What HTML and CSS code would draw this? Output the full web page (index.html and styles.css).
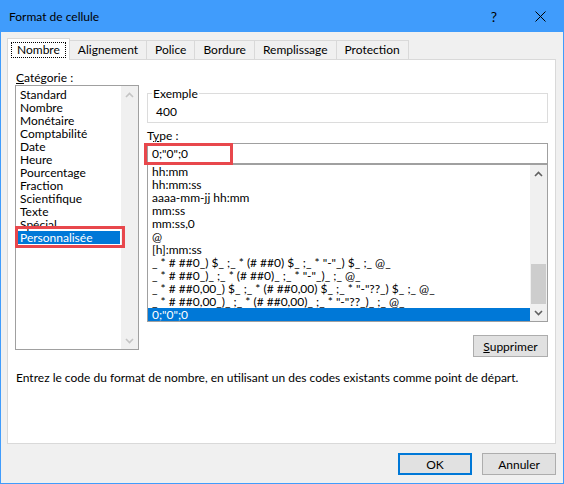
FILE: index.html
```html
<!DOCTYPE html>
<html lang="fr">
<head>
  <meta charset="UTF-8">
  <title>Format de cellule</title>
  <link rel="stylesheet" href="styles.css">
</head>
<body>
  <div class="dialog">
    <div class="titlebar">
      <span class="title">Format de cellule</span>
      <span class="help">?</span>
      <span class="close">
        <svg width="11" height="11" viewBox="0 0 11 11"><path d="M0.5 0.5 L10.5 10.5 M10.5 0.5 L0.5 10.5" stroke="#000" stroke-width="1" fill="none"/></svg>
      </span>
    </div>

    <div class="tabs">
      <div class="tab active"><span class="focus">Nombre</span></div>
      <div class="tab">Alignement</div>
      <div class="tab">Police</div>
      <div class="tab">Bordure</div>
      <div class="tab">Remplissage</div>
      <div class="tab">Protection</div>
    </div>

    <div class="panel">
      <div class="columns">
        <div class="cat-col">
          <div class="label"><u>C</u>atégorie :</div>
          <div class="listbox cat-list">
            <ul class="items">
              <li>Standard</li>
              <li>Nombre</li>
              <li>Monétaire</li>
              <li>Comptabilité</li>
              <li>Date</li>
              <li>Heure</li>
              <li>Pourcentage</li>
              <li>Fraction</li>
              <li>Scientifique</li>
              <li>Texte</li>
              <li>Spécial</li>
              <li class="selected">Personnalisée</li>
            </ul>
            <div class="scrollbar disabled">
              <span class="arrow"><svg width="9" height="6" viewBox="0 0 9 6"><path d="M1 5 L4.5 1.5 L8 5" /></svg></span>
              <span class="track"></span>
              <span class="arrow"><svg width="9" height="6" viewBox="0 0 9 6"><path d="M1 1 L4.5 4.5 L8 1" /></svg></span>
            </div>
          </div>
        </div>

        <div class="main-col">
          <fieldset class="sample">
            <legend>Exemple</legend>
            <div class="sample-value">400</div>
          </fieldset>

          <div class="label type-label">T<u>y</u>pe :</div>
          <div class="type-input">0;"0";0</div>

          <div class="listbox fmt-list">
            <ul class="items">
              <li>hh:mm</li>
              <li>hh:mm:ss</li>
              <li>aaaa-mm-jj hh:mm</li>
              <li>mm:ss</li>
              <li>mm:ss,0</li>
              <li>@</li>
              <li>[h]:mm:ss</li>
              <li>_ * # ##0_) $_ ;_ * (# ##0) $_ ;_ * "-"_) $_ ;_ @_</li>
              <li>_ * # ##0_)_ ;_ * (# ##0)_ ;_ * "-"_)_ ;_ @_</li>
              <li>_ * # ##0,00_) $_ ;_ * (# ##0,00) $_ ;_ * "-"??_) $_ ;_ @_</li>
              <li>_ * # ##0,00_)_ ;_ * (# ##0,00)_ ;_ * "-"??_)_ ;_ @_</li>
              <li class="selected">0;"0";0</li>
            </ul>
            <div class="scrollbar">
              <span class="arrow"><svg width="9" height="6" viewBox="0 0 9 6"><path d="M1 5 L4.5 1.5 L8 5" /></svg></span>
              <span class="track"><span class="thumb"></span></span>
              <span class="arrow"><svg width="9" height="6" viewBox="0 0 9 6"><path d="M1 1 L4.5 4.5 L8 1" /></svg></span>
            </div>
          </div>

          <div class="btn-row">
            <button class="btn"><u>S</u>upprimer</button>
          </div>
        </div>
      </div>

      <p class="hint">Entrez le code du format de nombre, en utilisant un des codes existants comme point de départ.</p>
    </div>

    <div class="footer">
      <button class="btn default">OK</button>
      <button class="btn">Annuler</button>
    </div>

    <div class="mark mark-cat"></div>
    <div class="mark mark-type"></div>
  </div>
</body>
</html>
```

FILE: styles.css
```css
body {
  margin: 0;
  font-family: Lato, "Liberation Sans", sans-serif;
  font-size: 12px;
  color: #000000;
  background-color: #ffffff;
}

.dialog {
  position: relative;
  width: 564px;
  height: 484px;
  box-sizing: border-box;
  border: 1px solid #409cfc;
  background-color: #f0f0f0;
}

/* barre de titre */
.titlebar {
  height: 31px;
  background-color: #409cfc;
  display: flex;
  align-items: center;
  padding-left: 8px;
}

.title {
  flex: 1;
  font-size: 12px;
}

.help {
  width: 46px;
  text-align: center;
  font-size: 14px;
}

.close {
  width: 46px;
  display: flex;
  justify-content: center;
}

/* onglets */
.tabs {
  display: flex;
  align-items: flex-end;
  height: 21px;
  margin: 6px 0 0 6px;
  position: relative;
  z-index: 1;
}

.tab {
  height: 19px;
  line-height: 18px;
  padding: 0 8px;
  border: 1px solid #d9d9d9;
  border-bottom: none;
  margin-left: -1px;
  box-sizing: border-box;
}

.tab:first-child {
  margin-left: 0;
}

.tab.active {
  height: 22px;
  margin-bottom: -1px;
  padding: 0 3px;
  background-color: #ffffff;
  position: relative;
  z-index: 2;
}

.tab .focus {
  display: inline-block;
  margin-top: 3px;
  padding: 0 5px;
  line-height: 14px;
  border: 1px dotted #000000;
}

/* panneau */
.panel {
  margin-left: 6px;
  width: 549px;
  height: 385px;
  box-sizing: border-box;
  border: 1px solid #d9d9d9;
  background-color: #ffffff;
  padding: 10px 6px 0 7px;
}

.columns {
  display: flex;
  gap: 8px;
}

.label {
  line-height: 15px;
  margin-left: 1px;
}

.cat-col {
  width: 124px;
}

.main-col {
  width: 401px;
  padding-top: 16px;
}

.listbox {
  display: flex;
  border: 1px solid #a0a0a0;
  box-sizing: border-box;
  background-color: #ffffff;
}

.items {
  list-style: none;
  margin: 0;
  padding: 0;
  flex: 1;
  overflow: hidden;
}

.items li {
  height: 13px;
  line-height: 13px;
  padding-left: 2px;
  white-space: pre;
}

.items li.selected {
  background-color: #0078d7;
  color: #ffffff;
}

.cat-list {
  height: 265px;
}

.cat-list .items {
  padding: 2px 1px 0 2px;
}

.fmt-list {
  height: 158px;
}

.fmt-list .items li {
  padding-left: 4px;
}

.scrollbar {
  width: 17px;
  display: flex;
  flex-direction: column;
  background-color: #f0f0f0;
}

.scrollbar .arrow {
  height: 17px;
  display: flex;
  align-items: center;
  justify-content: center;
}

.scrollbar svg path {
  fill: none;
  stroke: #606060;
  stroke-width: 1.6;
}

.scrollbar.disabled svg path {
  stroke: #c4c4c4;
}

.scrollbar .track {
  flex: 1;
  display: flex;
  flex-direction: column;
  justify-content: flex-end;
}

.scrollbar .thumb {
  height: 40px;
  margin: 0 1px;
  background-color: #cdcdcd;
}

/* exemple */
.sample {
  margin: 0;
  padding: 0 8px 1px;
  border: 1px solid #dcdcdc;
  height: 37px;
  box-sizing: border-box;
}

.sample legend {
  padding: 0 1px;
  margin-left: -4px;
  line-height: 15px;
}

.sample-value {
  line-height: 15px;
  margin-top: 3px;
}

.type-label {
  margin-top: 5px;
  margin-left: 0;
}

.type-input {
  height: 21px;
  line-height: 19px;
  box-sizing: border-box;
  border: 1px solid #a0a0a0;
  padding-left: 4px;
  white-space: pre;
}

.btn-row {
  display: flex;
  justify-content: flex-end;
  margin-top: 13px;
}

.btn {
  width: 75px;
  height: 22px;
  box-sizing: border-box;
  border: 1px solid #adadad;
  background-color: #e1e1e1;
  font-family: inherit;
  font-size: 12px;
  color: #000000;
  padding: 0;
}

.btn.default {
  border: 2px solid #0078d7;
}

.hint {
  margin: 13px 0 0 1px;
  line-height: 15px;
}

.footer {
  display: flex;
  justify-content: flex-end;
  gap: 10px;
  padding: 9px 7px 0 0;
}

.footer .btn {
  width: 74px;
}

/* encadrés rouges */
.mark {
  position: absolute;
  border: 3px solid #e8474c;
  box-sizing: border-box;
  height: 22px;
}

.mark-cat {
  left: 14px;
  top: 225px;
  width: 110px;
}

.mark-type {
  left: 143px;
  top: 142px;
  width: 89px;
}
```
